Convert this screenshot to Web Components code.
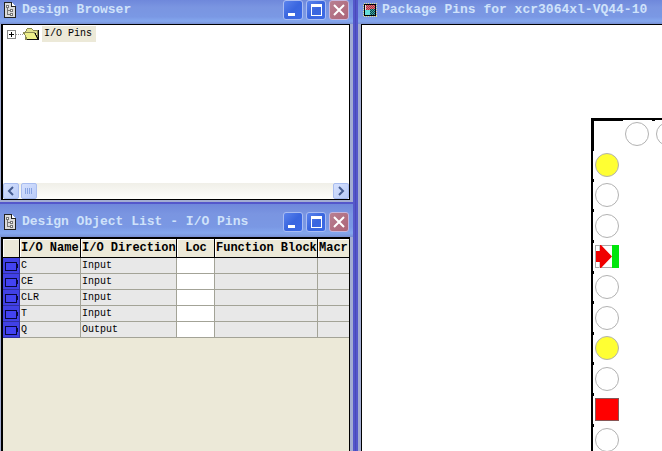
<!DOCTYPE html>
<html lang="en">
<head>
<meta charset="utf-8">
<title>Design Browser</title>
<style>
    html, body {
        margin: 0;
        height: 100%;
        overflow: hidden;
    }
    body {
        background: #7b93e0;
        font-family: "Liberation Mono", "DejaVu Sans Mono", monospace;
        font-size: 10px;
        color: #000;
    }
</style>
</head>
<body>
<pin-workspace>
    <mdi-window slot="side" class="browser" caption="Design Browser" controls>
        <doc-icon slot="icon"></doc-icon>
        <design-tree label="I/O Pins"></design-tree>
    </mdi-window>
    <mdi-window slot="side" class="objects" caption="Design Object List - I/O Pins" controls>
        <doc-icon slot="icon"></doc-icon>
        <object-list></object-list>
    </mdi-window>
    <mdi-window slot="main" class="package" caption="Package Pins for xcr3064xl-VQ44-10">
        <chip-icon slot="icon"></chip-icon>
        <package-view></package-view>
    </mdi-window>
</pin-workspace>

<script>
class PinWorkspace extends HTMLElement {
    constructor() {
        super();
        this.attachShadow({ mode: "open" });
    }

    connectedCallback() {
        this.shadowRoot.innerHTML = `
            <style>
                :host {
                    display: grid;
                    grid-template-columns: 356fr 306fr;
                    height: 100vh;
                }
                .side {
                    display: grid;
                    grid-template-rows: 204fr 247fr;
                    min-width: 0;
                    min-height: 0;
                    border-right: 1px solid #4a4cb8;
                    box-sizing: border-box;
                }
                .main {
                    display: grid;
                    min-width: 0;
                    min-height: 0;
                }
                ::slotted(.browser) {
                    --bar-pad: 0 4px 4px 3px;
                    --pane-pad: 0 3px 2px 1px;
                    --pane-border: 1px 1px 1px 2px;
                    --frame-bottom: 2px;
                    --frame-right: 2px;
                }
                ::slotted(.objects) {
                    --bar-pad: 8px 4px 5px 3px;
                    --pane-pad: 0 3px 0 1px;
                    --pane-border: 2px 1px 0 2px;
                    --pane-bg: #ece9d8;
                    --frame-right: 2px;
                }
                ::slotted(.package) {
                    --bar-pad: 0 5px 4px 5px;
                    --pane-pad: 0 0 0 3px;
                    --pane-border: 1px 0 0 1px;
                    --frame-left: 2px;
                }
            </style>
            <div class="side"><slot name="side"></slot></div>
            <div class="main"><slot name="main"></slot></div>
        `;
    }
}

class MdiWindow extends HTMLElement {
    constructor() {
        super();
        this.attachShadow({ mode: "open" });
    }

    connectedCallback() {
        const caption = this.getAttribute("caption") || "";
        const controls = this.hasAttribute("controls") ? `
            <div class="controls">
                <button type="button" aria-label="Minimize">
                    <svg width="18" height="18"><path d="M4 12h7v3H4z" fill="#fff"/></svg>
                </button>
                <button type="button" aria-label="Maximize">
                    <svg width="18" height="18"><path d="M4 3h11v12H4zM5 6v8h9V6z" fill="#fff" fill-rule="evenodd"/></svg>
                </button>
                <button type="button" class="close" aria-label="Close">
                    <svg width="18" height="18"><path d="M4 4l10 10M14 4L4 14" stroke="#fff" stroke-width="2"/></svg>
                </button>
            </div>` : "";

        this.shadowRoot.innerHTML = `
            <style>
                :host {
                    display: flex;
                    flex-direction: column;
                    min-width: 0;
                    min-height: 0;
                    box-sizing: border-box;
                    background: #7b8fe0;
                    border: 0 solid #5457cb;
                    border-right-width: var(--frame-right, 0);
                    border-bottom-width: var(--frame-bottom, 0);
                    border-left-width: var(--frame-left, 0);
                }
                .bar {
                    display: flex;
                    align-items: center;
                    gap: 4px;
                    padding: var(--bar-pad);
                    background: linear-gradient(#6f88db, #7a95e1 30%, #7a98e4 70%, #84a7ee 88%, #7890d4);
                }
                h1 {
                    flex: 1;
                    margin: 0;
                    font-size: 13px;
                    line-height: 20px;
                    font-weight: bold;
                    color: #cfe2fa;
                    white-space: nowrap;
                    overflow: hidden;
                }
                .controls {
                    display: flex;
                    gap: 3px;
                }
                button {
                    width: 20px;
                    height: 20px;
                    padding: 0;
                    border: 1px solid #a9bcf2;
                    border-radius: 3px;
                    background: linear-gradient(135deg, #5b83ed, #3a66df 50%, #3c6ae6);
                }
                button.close {
                    border-color: #c5b5dc;
                    background: linear-gradient(135deg, #b87f91, #ad6478);
                }
                button svg {
                    display: block;
                }
                .pane {
                    flex: 1;
                    display: grid;
                    min-height: 0;
                    padding: var(--pane-pad);
                    background: #a3add2;
                }
                .content {
                    display: grid;
                    min-width: 0;
                    min-height: 0;
                    overflow: hidden;
                    border: 0 solid #000;
                    border-width: var(--pane-border);
                    background: var(--pane-bg, #fff);
                }
            </style>
            <div class="bar">
                <slot name="icon"></slot>
                <h1>${caption}</h1>
                ${controls}
            </div>
            <div class="pane"><div class="content"><slot></slot></div></div>
        `;
    }
}

class DocIcon extends HTMLElement {
    constructor() {
        super();
        this.attachShadow({ mode: "open" }).innerHTML = `
            <style>
                :host { display: block; width: 15px; height: 16px; }
                svg { display: block; }
            </style>
            <svg width="15" height="16" shape-rendering="crispEdges">
                <path d="M1.5.5h7l4 4v11h-11z" fill="#dcdcdc" stroke="#222"/>
                <path d="M8.5.5v4h4" fill="#fff" stroke="#222"/>
                <path d="M4.5 5v8M4.5 8.500h3M4.500 12.500h3" fill="none" stroke="#777"/>
                <path d="M3.500 3.500h2v2h-2zM7.500 7.500h2v2h-2zM7.500 11.500h2v2h-2z" fill="#fff" stroke="#777"/>
            </svg>
        `;
    }
}

class ChipIcon extends HTMLElement {
    constructor() {
        super();
        this.attachShadow({ mode: "open" }).innerHTML = `
            <style>
                :host { display: block; width: 15px; height: 16px; }
                svg { display: block; }
            </style>
            <svg width="15" height="16" shape-rendering="crispEdges">
                <defs>
                    <pattern id="red" width="2" height="2" patternUnits="userSpaceOnUse">
                        <rect width="2" height="2" fill="#e0707a"/>
                        <path d="M0 0h1v1H0zM1 1h1v1H1z" fill="#a83440"/>
                    </pattern>
                    <pattern id="teal" width="2" height="2" patternUnits="userSpaceOnUse">
                        <rect width="2" height="2" fill="#37aaa9"/>
                        <path d="M0 0h1v1H0zM1 1h1v1H1z" fill="#123f43"/>
                    </pattern>
                </defs>
                <rect x=".5" y="1.5" width="13" height="13" fill="none" stroke="#e6e38a" stroke-dasharray="1 1"/>
                <rect x="1" y="2" width="12" height="12" fill="#000"/>
                <rect x="2" y="3" width="10" height="10" fill="#f4dcdc"/>
                <rect x="3" y="3" width="9" height="5" fill="url(#red)"/>
                <rect x="2" y="8" width="5" height="5" fill="#65dedb"/>
                <rect x="7" y="7" width="5" height="6" fill="url(#teal)"/>
            </svg>
        `;
    }
}

class DesignTree extends HTMLElement {
    constructor() {
        super();
        this.attachShadow({ mode: "open" });
    }

    connectedCallback() {
        this.shadowRoot.innerHTML = `
            <style>
                :host {
                    display: flex;
                    flex-direction: column;
                    justify-content: space-between;
                    min-height: 0;
                }
                .node {
                    display: flex;
                    align-items: center;
                    gap: 2px;
                    padding: 1px 4px;
                }
                .label {
                    padding: 0 4px 0 2px;
                    line-height: 16px;
                    background: #ece9d8;
                }
                .node svg { display: block; }
                .scroll {
                    display: flex;
                    gap: 2px;
                    background: linear-gradient(#f0efe8, #fdfdfb);
                }
                .scroll button {
                    width: 16px;
                    height: 16px;
                    padding: 0;
                    border: 1px solid #a9bdf0;
                    border-radius: 2px;
                    background: linear-gradient(135deg, #d6e1fd, #b9cbf8);
                }
                .scroll svg { display: block; }
                .next { margin-left: auto; }
            </style>
            <div class="node">
                <svg width="33" height="14" shape-rendering="crispEdges">
                    <rect x=".5" y="3.5" width="8" height="8" fill="#fff" stroke="#888"/>
                    <path d="M2 7.5h5M4.5 5v5" stroke="#000"/>
                    <path d="M9 7.5h8" stroke="#999" stroke-dasharray="1 1"/>
                    <path d="M18.5 4.5l2-3h4l2 2h4v9h-12z" fill="#e2e38e" stroke="#8c8c56"/>
                    <path d="M16.5 5.500h11l3 7h-10z" fill="#eef08a" stroke="#8c8c56"/>
                    <path d="M31.500 3v10M20 12.500h12M28 6l3 6" stroke="#111" fill="none"/>
                </svg>
                <span class="label">${this.getAttribute("label")}</span>
            </div>
            <div class="scroll">
                <button type="button" aria-label="Scroll left">
                    <svg width="14" height="14"><path d="M9 3L5 7l4 4" fill="none" stroke="#465d91" stroke-width="2"/></svg>
                </button>
                <button type="button" aria-label="Scroll position">
                    <svg width="14" height="14" shape-rendering="crispEdges"><path d="M3.5 4v6M5.5 4v6M7.5 4v6M9.5 4v6" stroke="#88a4e2"/></svg>
                </button>
                <button type="button" class="next" aria-label="Scroll right">
                    <svg width="14" height="14"><path d="M5 3l4 4-4 4" fill="none" stroke="#465d91" stroke-width="2"/></svg>
                </button>
            </div>
        `;
    }
}

class ObjectList extends HTMLElement {
    constructor() {
        super();
        this.attachShadow({ mode: "open" });
    }

    connectedCallback() {
        const pins = [
            ["C", "Input"],
            ["CE", "Input"],
            ["CLR", "Input"],
            ["T", "Input"],
            ["Q", "Output"]
        ];
        const rows = pins.map(([name, direction]) => `
            <tr>
                <td class="mark">
                    <svg width="16" height="15" shape-rendering="crispEdges">
                        <path d="M2.5 4.5h11v8h-11zM14.5 6v4" fill="#4343f2" stroke="#08083c"/>
                    </svg>
                </td>
                <td>${name}</td>
                <td>${direction}</td>
                <td class="loc"></td>
                <td></td>
                <td></td>
            </tr>`).join("");

        this.shadowRoot.innerHTML = `
            <style>
                :host {
                    display: block;
                    min-width: 0;
                }
                table {
                    width: 100%;
                    table-layout: fixed;
                    border-collapse: separate;
                    border-spacing: 0;
                }
                th, td {
                    box-sizing: border-box;
                    padding: 0 0 0 1px;
                    text-align: left;
                    white-space: nowrap;
                    overflow: hidden;
                }
                th {
                    height: 19px;
                    font-size: 12px;
                    line-height: 18px;
                    background: #ece9d8;
                    border-right: 1px solid #000;
                    border-bottom: 1px solid #000;
                    box-shadow: inset 1px 1px #fff;
                }
                th.center { text-align: center; }
                td {
                    height: 16px;
                    line-height: 15px;
                    background: #e8e8e8;
                    border-right: 1px solid #a3a397;
                    border-bottom: 1px solid #a3a397;
                }
                th:last-child, td:last-child { border-right: 0; }
                td.loc { background: #fff; }
                td.mark {
                    padding: 0;
                    background: #4141e5;
                    border-color: #3030a0;
                }
                svg { display: block; }
            </style>
            <table>
                <colgroup>
                    <col style="width: 17px">
                    <col style="width: 61px">
                    <col style="width: 96px">
                    <col style="width: 38px">
                    <col style="width: 103px">
                    <col>
                </colgroup>
                <thead>
                    <tr>
                        <th aria-label="Type"></th>
                        <th>I/O Name</th>
                        <th>I/O Direction</th>
                        <th class="center">Loc</th>
                        <th>Function Block</th>
                        <th>Macr</th>
                    </tr>
                </thead>
                <tbody>${rows}</tbody>
            </table>
        `;
    }
}

class PackageView extends HTMLElement {
    constructor() {
        super();
        this.attachShadow({ mode: "open" });
    }

    // one pin on the left edge of the package
    pin(kind, y) {
        if (kind === "input") {
            return `
                <rect x="233.5" y="${y - 11.5}" width="23" height="22" fill="#fff" stroke="#aaa"/>
                <path d="M237.5 ${y - 11}v22" stroke="#ccc"/>
                <path d="M234 ${y - 6}h4v-6h1l11 11.5-11 11.5h-1v-6h-4z" fill="#f00000"/>
                <rect x="250" y="${y - 12}" width="7" height="23" fill="#00e60c"/>`;
        }
        if (kind === "output") {
            return `<rect x="233.5" y="${y - 11.5}" width="23" height="22" fill="#f00" stroke="#855"/>`;
        }
        const fill = kind === "global" ? "#ffff33" : "#fff";
        return `<circle cx="245" cy="${y}" r="11.5" fill="${fill}" stroke="#b2b2b2"/>`;
    }

    connectedCallback() {
        const kinds = [
            ["global", 140], ["free", 170], ["free", 201], ["input", 232], ["free", 262],
            ["free", 293], ["global", 323], ["free", 354], ["output", 385], ["free", 415]
        ];
        const pins = kinds.map(([kind, y]) => this.pin(kind, y)).join("");
        const ticks = kinds.slice(0, -1).map(([, y]) => `<path d="M231 ${y + 14}h1v3h-1z"/>`).join("");

        this.shadowRoot.innerHTML = `
            <style>
                :host {
                    display: block;
                    min-width: 0;
                    min-height: 0;
                    overflow: hidden;
                }
                svg { display: block; }
            </style>
            <svg width="640" height="640" role="img" aria-label="Package pins">
                <g shape-rendering="crispEdges">
                    <path d="M229 93h411v2H229zM229 93h32v3h-32zM229 93h2v547h-2zM229 93h3v33h-3zM290 95h3v1h-3z"/>
                    ${ticks}
                </g>
                <circle cx="275" cy="109" r="11.5" fill="#fff" stroke="#b2b2b2"/>
                <circle cx="306" cy="109" r="11.5" fill="#fff" stroke="#b2b2b2"/>
                ${pins}
            </svg>
        `;
    }
}

customElements.define("pin-workspace", PinWorkspace);
customElements.define("mdi-window", MdiWindow);
customElements.define("doc-icon", DocIcon);
customElements.define("chip-icon", ChipIcon);
customElements.define("design-tree", DesignTree);
customElements.define("object-list", ObjectList);
customElements.define("package-view", PackageView);
</script>
</body>
</html>
